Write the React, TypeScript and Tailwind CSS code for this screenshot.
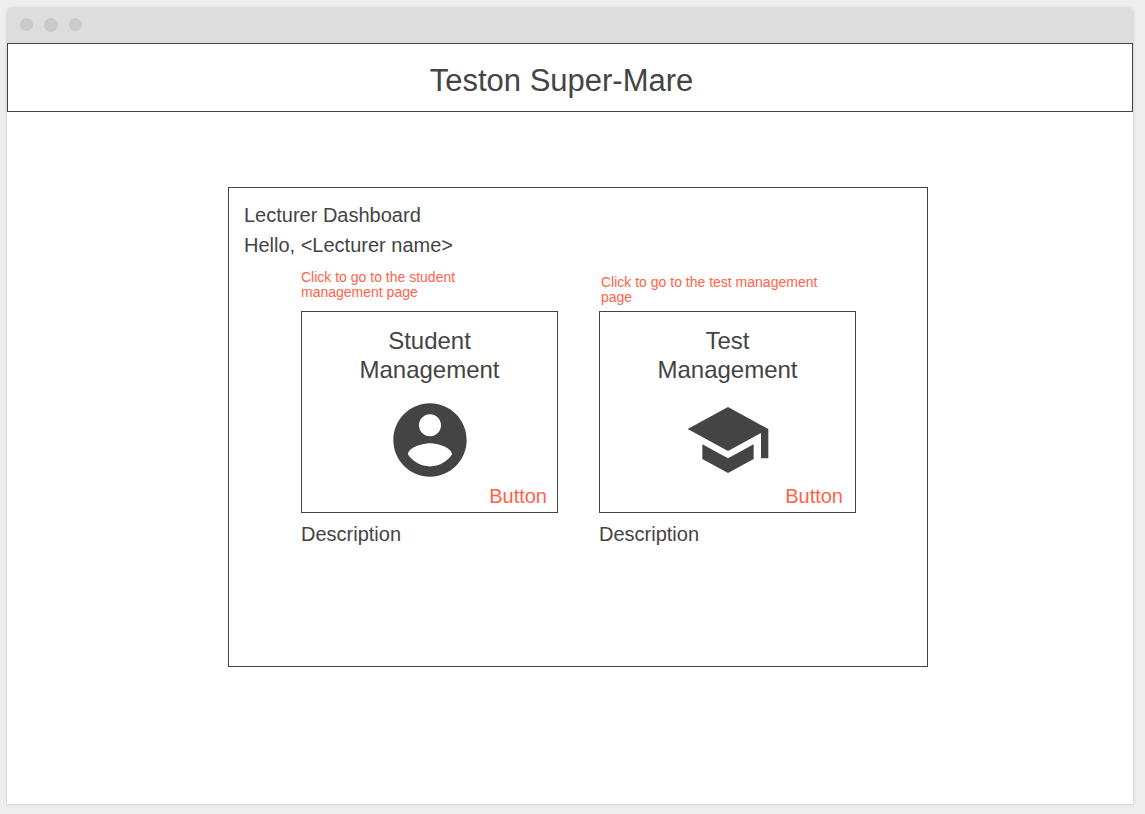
import type { ReactNode } from "react";

function AccountIcon() {
  return (
    <svg viewBox="0 0 24 24" className="size-[88px] fill-current" aria-hidden="true">
      <path d="M12 2C6.48 2 2 6.48 2 12s4.48 10 10 10 10-4.48 10-10S17.52 2 12 2zm0 3c1.66 0 3 1.34 3 3s-1.34 3-3 3-3-1.34-3-3 1.34-3 3-3zm0 14.2c-2.5 0-4.71-1.28-6-3.22.03-1.99 4-3.08 6-3.08 1.99 0 5.97 1.09 6 3.08-1.29 1.94-3.5 3.22-6 3.22z" />
    </svg>
  );
}

function SchoolIcon() {
  return (
    <svg viewBox="0 0 24 24" className="size-[88px] fill-current" aria-hidden="true">
      <path d="M5 13.18v4L12 21l7-3.82v-4L12 17l-7-3.82zM12 3L1 9l11 6 9-4.91V17h2V9L12 3z" />
    </svg>
  );
}

type CardProps = {
  note: ReactNode;
  title: ReactNode;
  icon: ReactNode;
  noteClass: string;
  labelClass: string;
};

function Card({ note, title, icon, noteClass, labelClass }: CardProps) {
  return (
    <div className="flex flex-col">
      <p className={`flex h-[51px] flex-col justify-end text-[14px] leading-[15px] text-[#ff6347] ${noteClass}`}>
        <span>{note}</span>
      </p>
      <button type="button" className="flex cursor-pointer flex-col items-center border border-[#444] pt-[14px] pb-1">
        <span className="text-center text-[24px] leading-[29px]">{title}</span>
        <span className="mt-3">{icon}</span>
        <span className={`self-end text-xl leading-6 text-[#ff6347] ${labelClass}`}>Button</span>
      </button>
      <p className="mt-2 text-xl leading-[26px]">Description</p>
    </div>
  );
}

export default function App() {
  return (
    <div className="flex min-h-screen flex-col bg-[#eee] pt-[7px] pr-[11px] pb-[9px] pl-[6px] font-['Liberation_Sans',Arial,sans-serif] text-[#444]">
      <div className="flex grow flex-col overflow-hidden rounded-t-md border border-t-0 border-[#ddd] bg-white shadow-[0_0_4px_rgba(0,0,0,0.06)]">
        <div className="flex h-9 items-center gap-[11px] bg-[#ddd] pb-px pl-[13px]">
          <span className="size-[13px] rounded-full bg-[#cacaca]" />
          <span className="size-[14px] rounded-full bg-[#cacaca]" />
          <span className="size-[13px] rounded-full bg-[#cacaca]" />
        </div>
        <header className="border border-[#444] pt-[19px] pr-[17px] pb-3 text-center">
          <h1 className="text-[31px] leading-9">Teston Super-Mare</h1>
        </header>
        <main className="flex justify-center pt-[75px] pl-4">
          <section className="min-h-[480px] w-full max-w-[700px] border border-[#444] pt-3">
            <div className="pl-[15px] text-xl leading-[30px]">
              <h2>Lecturer Dashboard</h2>
              <p>Hello, &lt;Lecturer name&gt;</p>
            </div>
            <div className="grid grid-cols-2 gap-[41px] pr-[71px] pl-[72px]">
              <Card
                note={<>Click to go to the student<br />management page</>}
                title={<>Student<br />Management</>}
                icon={<AccountIcon />}
                noteClass="pb-[11px]"
                labelClass="pr-[10px]"
              />
              <Card
                note={<>Click to go to the test management<br />page</>}
                title={<>Test<br />Management</>}
                icon={<SchoolIcon />}
                noteClass="pb-[6px] pl-0.5"
                labelClass="pr-3"
              />
            </div>
          </section>
        </main>
      </div>
    </div>
  );
}
